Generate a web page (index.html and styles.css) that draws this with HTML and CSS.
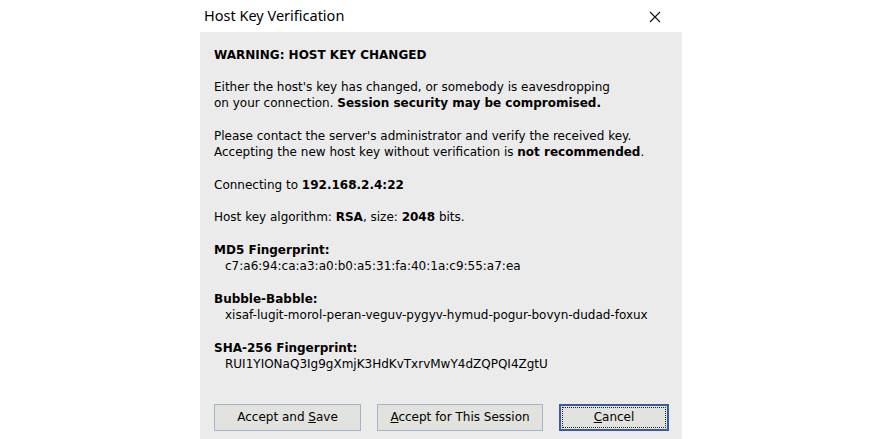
FILE: index.html
```html
<!doctype html>
<html>
<head>
<meta charset="utf-8">
<title>Host Key Verification</title>
<link rel="stylesheet" href="styles.css">
</head>
<body>
  <div class="dialog">
    <div class="titlebar">
      <span class="title">Host Key Verification</span>
      <svg class="close" width="12" height="12" viewBox="0 0 12 12">
        <path d="M1 1 L11 11 M11 1 L1 11" stroke="#111" stroke-width="1.1" fill="none"/>
      </svg>
    </div>

    <div class="panel">
      <div class="warning">WARNING: HOST KEY CHANGED</div>

      <p>Either the host's key has changed, or somebody is eavesdropping<br>
      on your connection. <b>Session security may be compromised.</b></p>

      <p>Please contact the server's administrator and verify the received key.<br>
      Accepting the new host key without verification is <b>not recommended</b>.</p>

      <p>Connecting to <b>192.168.2.4:22</b></p>

      <p>Host key algorithm: <b>RSA</b>, size: <b>2048</b> bits.</p>

      <p class="fp"><b>MD5 Fingerprint:</b><br>
      <span class="val">c7:a6:94:ca:a3:a0:b0:a5:31:fa:40:1a:c9:55:a7:ea</span></p>

      <p class="fp"><b>Bubble-Babble:</b><br>
      <span class="val">xisaf-lugit-morol-peran-veguv-pygyv-hymud-pogur-bovyn-dudad-foxux</span></p>

      <p class="fp"><b>SHA-256 Fingerprint:</b><br>
      <span class="val">RUI1YIONaQ3Ig9gXmjK3HdKvTxrvMwY4dZQPQI4ZgtU</span></p>

      <div class="buttons">
        <button class="btn save">Accept and <u>S</u>ave</button>
        <button class="btn session"><u>A</u>ccept for This Session</button>
        <button class="btn cancel"><span class="focus"><u>C</u>ancel</span></button>
      </div>
    </div>
  </div>
</body>
</html>
```

FILE: styles.css
```css
html, body { margin:0; padding:0; background:#fff; width:100%; height:100%; }

.dialog {
  width:490px;
  margin-left:193px;
  height:439px;
  display:flex;
  flex-direction:column;
}

.titlebar {
  height:32px;
  display:flex;
  align-items:center;
  justify-content:space-between;
  padding:0 22px 0 11px;
}

.title {
  font: 14.5px "Noto Sans", "Open Sans", sans-serif;
  color:#000;
  position:relative;
  top:-1px;
}

.close { display:block; margin-top:1px; }

.panel {
  flex:1;
  margin-left:7px;
  width:482px;
  background:#ebebeb;
  padding:15px 0 0 14px;
  box-sizing:border-box;
  font: 12px "DejaVu Sans", sans-serif;
  color:#000;
  line-height:16.5px;
}

.warning {
  font-weight:bold;
  margin:0 0 15px;
}

.panel p { margin:0 0 16px; }
.panel p.fp { margin-bottom:16px; }

.val { padding-left:11px; }

.buttons {
  display:flex;
  margin-top:31px;
}

.btn {
  height:27px;
  font: 12px "DejaVu Sans", sans-serif;
  color:#000;
  background:#e2e2de;
  border:1px solid #a3b3c9;
  padding:0;
  box-sizing:border-box;
}

.save { width:147px; }
.session { width:166px; margin-left:16px; }

.cancel {
  width:110px;
  margin-left:16px;
  border:2px solid #3d5b96;
  padding:1px;
}

.cancel .focus {
  display:block;
  height:100%;
  border:1px dotted #222;
  box-sizing:border-box;
  line-height:19px;
}
```
